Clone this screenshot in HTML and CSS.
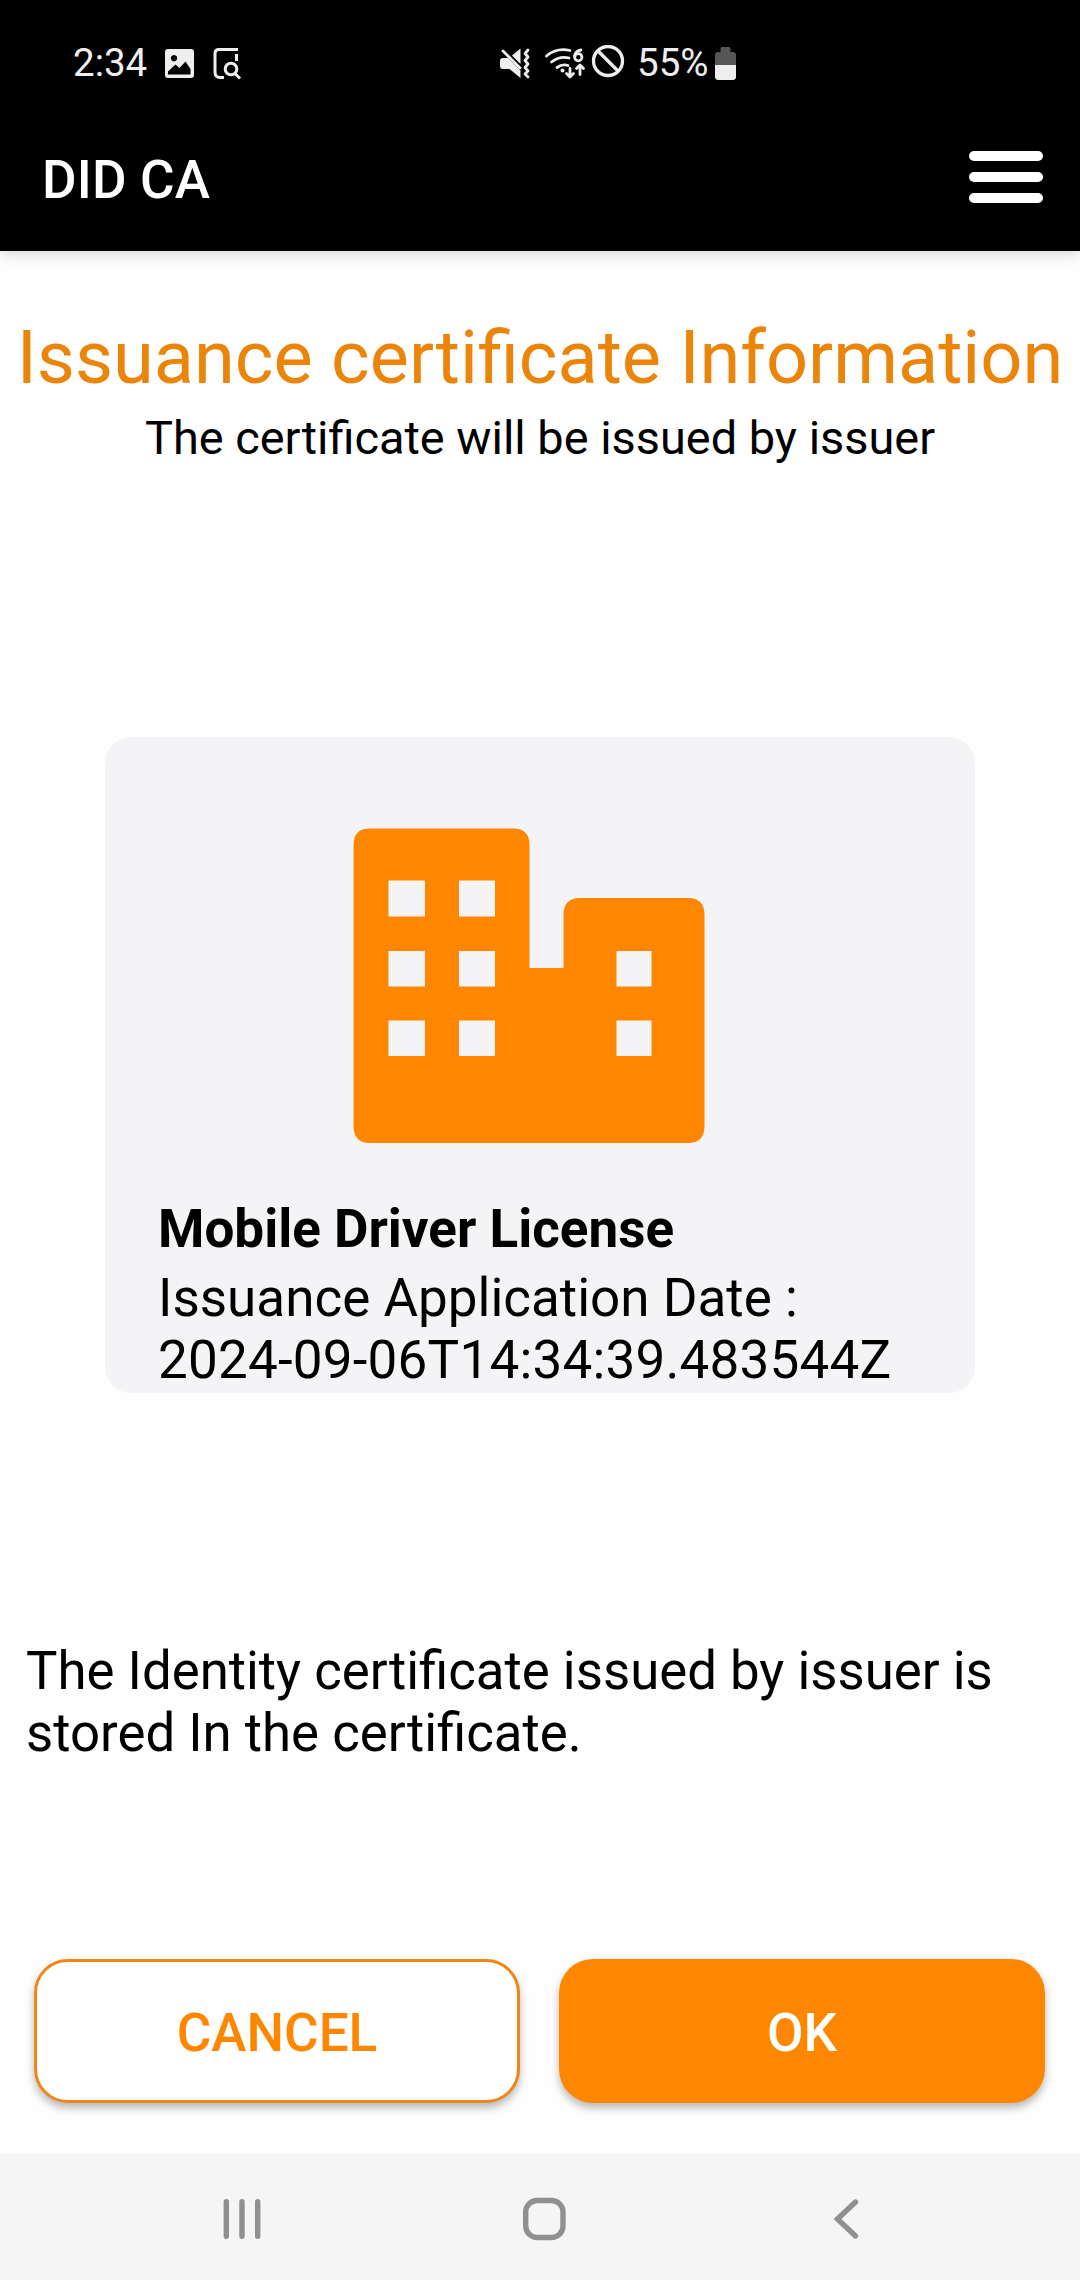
FILE: index.html
```html
<!DOCTYPE html>
<html lang="en">
<head>
<meta charset="utf-8">
<title>DID CA</title>
<link rel="stylesheet" href="styles.css">
</head>
<body>
<div class="screen">
  <div class="status-bar">
    <span class="clock">2:34</span>
    <svg class="status-left" width="80" height="36" viewBox="163 45 80 36">
      <path fill="#eee" fill-rule="evenodd" d="M168 49h23q3 0 3 3v23q0 3-3 3h-23q-3 0-3-3V52q0-3 3-3zM174 55a3.200 3.200 0 1 0 .01 0zM168 74.500h22.500V69l-5-7.500-6 6.500-4-3.500-7.500 7z"/>
      <g fill="none" stroke="#eee" stroke-width="3">
        <path d="M238 49.500h-19q-4 0-4 4V72q0 5.500 5 5.500h4M236.500 54v7"/>
        <circle cx="231" cy="69" r="5.800"/>
        <path d="M235 73.500l5 5"/>
      </g>
    </svg>
    <svg class="status-right" width="130" height="36" viewBox="498 45 130 36">
      <path fill="#eee" d="M503 58h5l12.500 12.500v7.500l-11-9h-6.500q-3 0-3-3v-5q0-3 3-3zM512 55.500l8.500-7v15.500z"/>
      <g fill="none" stroke="#eee" stroke-width="2.800" stroke-linecap="round" stroke-linejoin="round">
        <path d="M503 51l17 17"/>
        <path d="M528 50l-3 3.500 3 3.500-3 3.500 3 3.500-3 3.500 3 3.500-3 3 3 3"/>
        <path d="M546.500 56q10-8.500 23.500-5.500M551.500 62q8.500-6.500 17.500-4M557 67.500q5.500-4 11-2"/>
        <path d="M581 50q-5 .5-6.500 6"/>
        <circle cx="578.300" cy="57.200" r="3.600"/>
        <path d="M570 68.500v8M566.500 73.500l3.500 3.500 3.500-3.500M580 74.500v-9M576.500 68.500l3.500-3.500 3.500 3.500"/>
      </g>
      <circle cx="562.500" cy="70.500" r="2" fill="#eee"/>
      <circle cx="608" cy="61" r="14.500" fill="none" stroke="#eee" stroke-width="3.300"/>
      <path d="M598 51l20 20" stroke="#eee" stroke-width="3.300"/>
    </svg>
    <span class="battery-text">55%</span>
    <svg class="battery" width="21" height="33" viewBox="0 0 21 33">
      <path fill="#555" d="M7 0h7q1.500 0 1.500 2v3H18q3 0 3 3v10H0V8q0-3 3-3h2.500V2q0-2 1.500-2z"/>
      <path fill="#eee" d="M0 18h21v11.500q0 3.500-3.500 3.500h-14Q0 33 0 29.500z"/>
    </svg>
  </div>
  <header class="app-bar">
    <h1 class="app-title">DID CA</h1>
    <div class="menu"><i></i><i></i><i></i></div>
  </header>
  <main class="content">
    <h2 class="title">Issuance certificate Information</h2>
    <p class="subtitle">The certificate will be issued by issuer</p>
    <section class="card">
      <svg class="building" width="352" height="316" viewBox="353 828 352 316">
        <path fill="#ff8700" fill-rule="evenodd" d="M370 828.500H513Q529.500 828.500 529.500 845V968H563.500V915Q563.500 898 580 898H688Q704.500 898 704.500 915V1126Q704.500 1143 688 1143H370Q353.500 1143 353.500 1126V845Q353.500 828.500 370 828.500z
          M388.500 880.500v36h36.500v-36zM459 880.500v36h36v-36zM388.500 951v35.500h36.500V951zM459 951v35.500h36V951zM616.500 951v35.500h35V951zM388.500 1020.500v35.500h36.500v-35.500zM459 1020.500v35.500h36v-35.500zM616.500 1020.500v35.500h35v-35.500z"/>
      </svg>
      <h3 class="card-title">Mobile Driver License</h3>
      <p class="card-text">Issuance Application Date :<br><span class="timestamp">2024-09-06T14:34:39.483544Z</span></p>
    </section>
    <p class="note">The Identity certificate issued by issuer is<br>stored In the certificate.</p>
    <div class="actions">
      <button class="btn btn-outline">CANCEL</button>
      <button class="btn btn-solid">OK</button>
    </div>
  </main>
  <nav class="nav-bar">
    <svg width="640" height="46" viewBox="221 2196 640 46" fill="none" stroke="#909090" stroke-width="5.400" stroke-linecap="round">
      <path d="M226.300 2201.700v34.600M242 2201.700v34.600M257.700 2201.700v34.600"/>
      <rect x="525.700" y="2200.500" width="37.300" height="37" rx="11.500"/>
      <path d="M855.500 2202l-18 17 18 17"/>
    </svg>
  </nav>
</div>
</body>
</html>
```
FILE: styles.css
```css
* { box-sizing: border-box; }
body { margin: 0; background: #fefefe; color: #000; font-family: Roboto, "Liberation Sans", sans-serif; }
h1, h2, h3, p { margin: 0; }
svg { display: block; flex: none; }
.screen { width: 1080px; height: 2280px; display: flex; flex-direction: column; overflow: hidden; }
.status-bar { height: 126px; flex: none; background: #000; color: #eee; display: flex; align-items: flex-start; padding: 45px 0 0 73px; font-size: 38.500px; line-height: 36px; }
.clock { width: 90px; }
.status-left { margin-right: 255px; }
.battery-text { width: 78px; margin-left: 9px; }
.battery { margin-top: 2px; }
.app-bar { height: 125px; flex: none; background: #000; color: #fff; display: flex; justify-content: space-between; padding: 0 37px 0 42px; box-shadow: 0 3px 14px rgba(0, 0, 0, .16); }
.app-title { font-size: 53px; font-weight: 500; line-height: 62px; margin-top: 23px; letter-spacing: .15px; }
.menu { width: 74px; height: 52px; margin-top: 25px; display: flex; flex-direction: column; justify-content: space-between; }
.menu i { height: 10px; border-radius: 5px; background: #fff; }
.content { flex: 1; display: flex; flex-direction: column; align-items: center; }
.title { margin-top: 62px; font-size: 73.900px; font-weight: 400; line-height: 90px; color: #eb8509; white-space: nowrap; }
.subtitle { margin-top: 7px; font-size: 46.900px; line-height: 56px; white-space: nowrap; }
.card { width: 870px; height: 656px; margin-top: 271px; padding: 91px 53px 0; border-radius: 26px; background: #f4f4f7; }
.building { margin-left: 195px; }
.card-title { margin-top: 54px; font-size: 53px; font-weight: 700; line-height: 62px; white-space: nowrap; }
.card-text { margin-top: 7px; font-size: 53px; line-height: 62px; white-space: nowrap; }
.timestamp { letter-spacing: .2px; }
.note { align-self: stretch; margin-top: 247px; padding-left: 26px; font-size: 52.750px; line-height: 62px; white-space: nowrap; }
.actions { align-self: stretch; margin-top: 195px; padding: 0 35px 0 34px; display: grid; grid-template-columns: 1fr 1fr; gap: 39px; }
.btn { height: 144px; padding: 4px 0 0; border: 0; border-radius: 34px; font: 500 53px/62px Roboto, "Liberation Sans", sans-serif; box-shadow: 0 5px 8px rgba(0, 0, 0, .28); }
.btn-outline { border: 3px solid #ee861a; background: #fff; color: #ff8700; }
.btn-solid { background: #ff8700; color: #fff; }
.nav-bar { height: 126px; flex: none; background: #f5f5f5; padding: 42px 0 0 221px; }
```
